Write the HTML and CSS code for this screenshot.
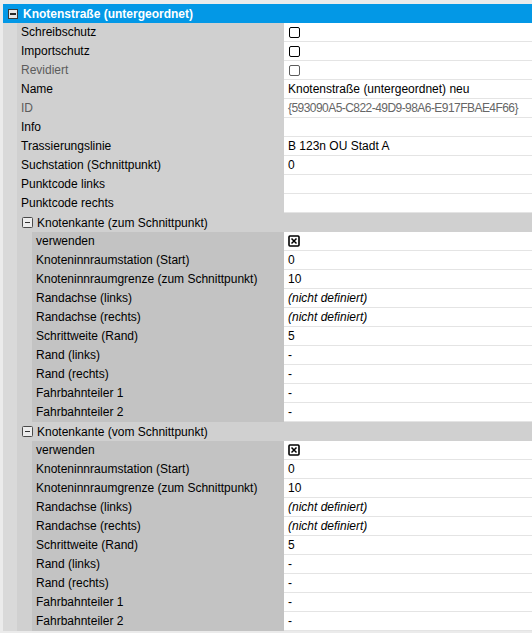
FILE: index.html
```html
<!DOCTYPE html>
<html lang="de">
<head>
<meta charset="utf-8">
<link rel="stylesheet" href="styles.css">
</head>
<body>
<div class="grid">
  <div class="cat">
    <svg class="cat-icon" width="10" height="10" viewBox="0 0 10 10"><rect x="0.5" y="0.5" width="9" height="9" fill="#e8e8e8" stroke="#3a3a3a"/><rect x="2" y="4" width="6" height="2" fill="#2a2a2a"/></svg>
    <span class="cat-title">Knotenstraße (untergeordnet)</span>
  </div>
  <div class="body">
    <div class="gutter"></div>
    <div class="rows">
      <div class="row"><div class="name">Schreibschutz</div><div class="val"><span class="cb"></span></div></div>
      <div class="row"><div class="name">Importschutz</div><div class="val"><span class="cb"></span></div></div>
      <div class="row"><div class="name dis">Revidiert</div><div class="val"><span class="cb cb-dis"></span></div></div>
      <div class="row"><div class="name">Name</div><div class="val">Knotenstraße (untergeordnet) neu</div></div>
      <div class="row"><div class="name dis">ID</div><div class="val dis guid">{593090A5-C822-49D9-98A6-E917FBAE4F66}</div></div>
      <div class="row"><div class="name">Info</div><div class="val"></div></div>
      <div class="row"><div class="name">Trassierungslinie</div><div class="val">B 123n OU Stadt A</div></div>
      <div class="row"><div class="name">Suchstation (Schnittpunkt)</div><div class="val">0</div></div>
      <div class="row"><div class="name">Punktcode links</div><div class="val"></div></div>
      <div class="row"><div class="name">Punktcode rechts</div><div class="val"></div></div>

      <div class="group">
        <div class="group-head">
          <svg class="grp-icon" width="11" height="11" viewBox="0 0 11 11"><rect x="0.5" y="0.5" width="10" height="10" rx="1" fill="#ececec" stroke="#4a4a4a"/><rect x="3" y="5" width="5" height="1" fill="#333"/></svg>
          <span>Knotenkante (zum Schnittpunkt)</span>
        </div>
        <div class="group-body">
          <div class="gutter2"></div>
          <div class="rows">
            <div class="row"><div class="name sub">verwenden</div><div class="val"><span class="cbx"><svg width="12" height="12" viewBox="0 0 12 12"><rect x="1" y="1" width="10" height="10" rx="1" fill="#fff" stroke="#000" stroke-width="1.6"/><path d="M3.5 3.5 L8.5 8.5 M8.5 3.5 L3.5 8.5" stroke="#000" stroke-width="1.5"/></svg></span></div></div>
            <div class="row"><div class="name sub">Knoteninnraumstation (Start)</div><div class="val">0</div></div>
            <div class="row"><div class="name sub">Knoteninnraumgrenze (zum Schnittpunkt)</div><div class="val">10</div></div>
            <div class="row"><div class="name sub">Randachse (links)</div><div class="val it">(nicht definiert)</div></div>
            <div class="row"><div class="name sub">Randachse (rechts)</div><div class="val it">(nicht definiert)</div></div>
            <div class="row"><div class="name sub">Schrittweite (Rand)</div><div class="val">5</div></div>
            <div class="row"><div class="name sub">Rand (links)</div><div class="val">-</div></div>
            <div class="row"><div class="name sub">Rand (rechts)</div><div class="val">-</div></div>
            <div class="row"><div class="name sub">Fahrbahnteiler 1</div><div class="val">-</div></div>
            <div class="row"><div class="name sub">Fahrbahnteiler 2</div><div class="val">-</div></div>
          </div>
        </div>
      </div>

      <div class="group">
        <div class="group-head">
          <svg class="grp-icon" width="11" height="11" viewBox="0 0 11 11"><rect x="0.5" y="0.5" width="10" height="10" rx="1" fill="#ececec" stroke="#4a4a4a"/><rect x="3" y="5" width="5" height="1" fill="#333"/></svg>
          <span>Knotenkante (vom Schnittpunkt)</span>
        </div>
        <div class="group-body">
          <div class="gutter2"></div>
          <div class="rows">
            <div class="row"><div class="name sub">verwenden</div><div class="val"><span class="cbx"><svg width="12" height="12" viewBox="0 0 12 12"><rect x="1" y="1" width="10" height="10" rx="1" fill="#fff" stroke="#000" stroke-width="1.6"/><path d="M3.5 3.5 L8.5 8.5 M8.5 3.5 L3.5 8.5" stroke="#000" stroke-width="1.5"/></svg></span></div></div>
            <div class="row"><div class="name sub">Knoteninnraumstation (Start)</div><div class="val">0</div></div>
            <div class="row"><div class="name sub">Knoteninnraumgrenze (zum Schnittpunkt)</div><div class="val">10</div></div>
            <div class="row"><div class="name sub">Randachse (links)</div><div class="val it">(nicht definiert)</div></div>
            <div class="row"><div class="name sub">Randachse (rechts)</div><div class="val it">(nicht definiert)</div></div>
            <div class="row"><div class="name sub">Schrittweite (Rand)</div><div class="val">5</div></div>
            <div class="row"><div class="name sub">Rand (links)</div><div class="val">-</div></div>
            <div class="row"><div class="name sub">Rand (rechts)</div><div class="val">-</div></div>
            <div class="row"><div class="name sub">Fahrbahnteiler 1</div><div class="val">-</div></div>
            <div class="row"><div class="name sub">Fahrbahnteiler 2</div><div class="val">-</div></div>
          </div>
        </div>
      </div>
    </div>
  </div>
</div>
</body>
</html>
```

FILE: styles.css
```css
html, body {
  margin: 0;
  padding: 0;
  background: #ebebeb;
  height: 633px;
  overflow: hidden;
}
body {
  font-family: "Liberation Sans", Arial, sans-serif;
  font-size: 12px;
  color: #000;
}
.grid {
  margin: 4px 0 0 3px;
  width: 529px;
}
.cat {
  height: 19px;
  background: #0398e6;
  display: flex;
  align-items: center;
  color: #fff;
  font-weight: bold;
}
.cat-icon {
  margin-left: 5px;
  margin-right: 5px;
  flex: none;
}
.body {
  display: flex;
}
.gutter {
  width: 14px;
  flex: none;
  background: #d9d9d9;
}
.rows {
  flex: 1;
  display: flex;
  flex-direction: column;
}
.row {
  display: flex;
  height: 19px;
}
.name {
  width: 263px;
  flex: none;
  background: #d0d0d0;
  padding-left: 4px;
  line-height: 19px;
  white-space: nowrap;
  overflow: hidden;
}
.name.sub {
  width: 248px;
  background: #c3c3c3;
}
.dis {
  color: #5c5c5c;
}
.val {
  flex: 1;
  background: #fff;
  border-bottom: 1px solid #e4e4e4;
  padding-left: 4px;
  line-height: 18px;
  white-space: nowrap;
  overflow: hidden;
  display: flex;
  align-items: center;
}
.val.dis {
  color: #666;
}
.val.guid {
  letter-spacing: -0.55px;
}
.val.it {
  font-style: italic;
}
.cb {
  display: inline-block;
  width: 9px;
  height: 9px;
  border: 1px solid #000;
  border-radius: 2px;
  margin-left: 1px;
  background: #fff;
}
.cb-dis {
  border-color: #5c5c5c;
}
.cbx {
  display: inline-flex;
  margin-left: 0;
}
.group-head {
  height: 19px;
  background: #d0d0d0;
  display: flex;
  align-items: center;
}
.grp-icon {
  margin-left: 5px;
  margin-right: 4px;
  flex: none;
}
.group-body {
  display: flex;
}
.gutter2 {
  width: 15px;
  flex: none;
  background: #d0d0d0;
}
```
